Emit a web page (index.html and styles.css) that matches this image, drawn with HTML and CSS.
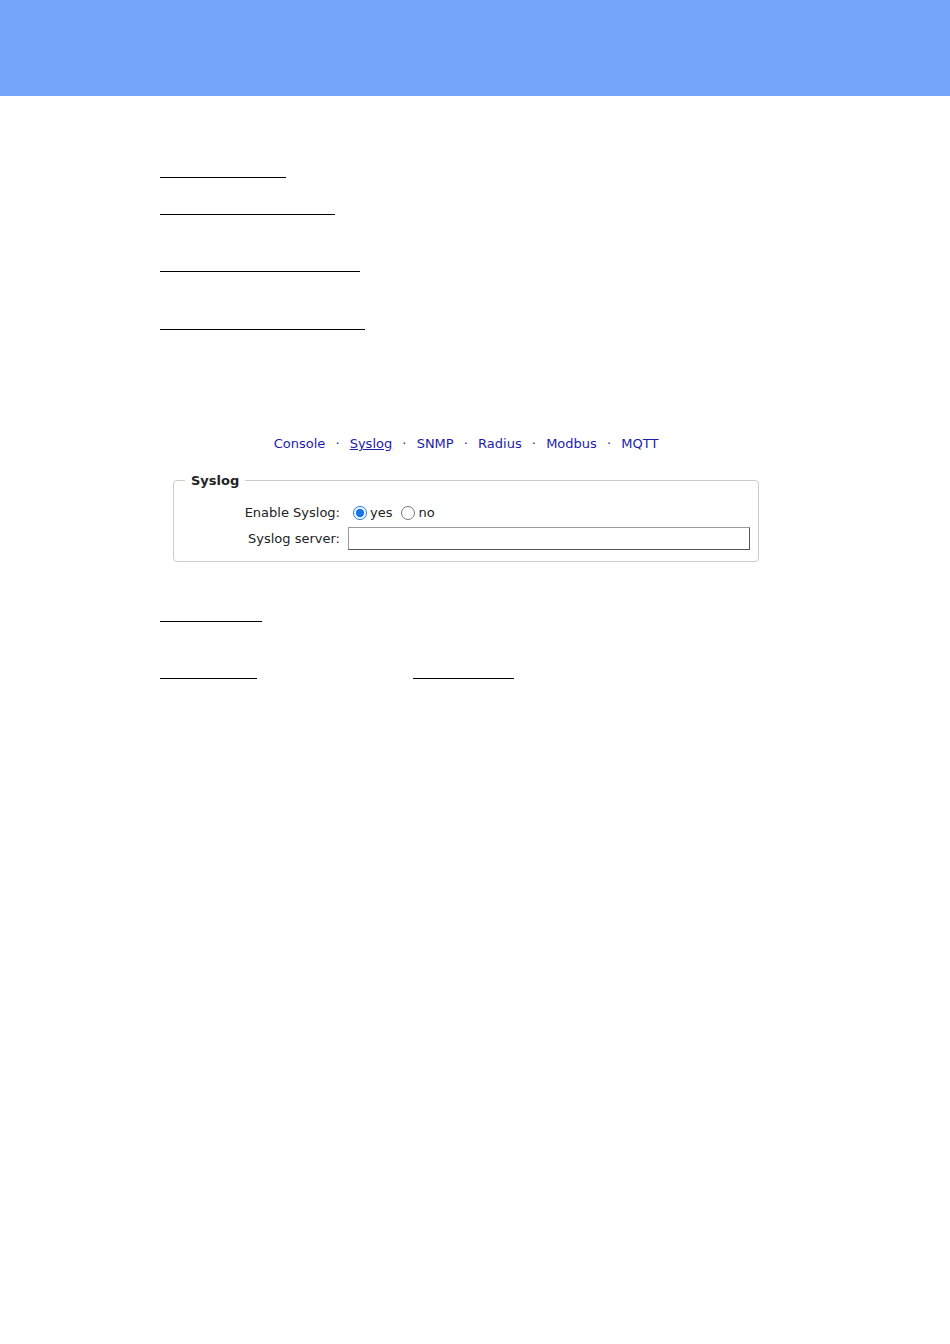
FILE: index.html
```html
<!DOCTYPE html>
<html lang="en">
<head>
    <meta charset="UTF-8">
    <title>Syslog</title>
    <link rel="stylesheet" href="styles.css">
</head>
<body>
    <div class="header"></div>
    <div class="page">
        <div class="rule r1"></div>
        <div class="rule r2"></div>
        <div class="rule r3"></div>
        <div class="rule r4"></div>

        <div class="nav">
            <a href="#">Console</a> <span class="dot">&middot;</span>
            <a href="#" class="current">Syslog</a> <span class="dot">&middot;</span>
            <a href="#">SNMP</a> <span class="dot">&middot;</span>
            <a href="#">Radius</a> <span class="dot">&middot;</span>
            <a href="#">Modbus</a> <span class="dot">&middot;</span>
            <a href="#">MQTT</a>
        </div>

        <fieldset class="box">
            <legend>Syslog</legend>
            <div class="row">
                <label class="lbl">Enable Syslog:</label>
                <div class="val">
                    <label class="opt"><input type="radio" name="en" checked>yes</label>
                    <label class="opt"><input type="radio" name="en">no</label>
                </div>
            </div>
            <div class="row">
                <label class="lbl" for="server">Syslog server:</label>
                <div class="val"><input type="text" id="server" class="server"></div>
            </div>
        </fieldset>

        <div class="rule r5"></div>
        <div class="pair">
            <div class="rule r6"></div>
            <div class="rule r7"></div>
        </div>
    </div>
</body>
</html>
```

FILE: styles.css
```css
body {
    margin: 0;
    background: #ffffff;
    font-family: "DejaVu Sans", Verdana, sans-serif;
    color: #222222;
}
.header {
    height: 96px;
    background: #75a5fa;
}
.page {
    padding: 81px 0 0 160px;
}
.rule {
    height: 1px;
    background: #000000;
}
.r1 { width: 126px; }
.r2 { width: 175px; margin-top: 36px; }
.r3 { width: 200px; margin-top: 56px; }
.r4 { width: 205px; margin-top: 57px; }
.r5 { width: 102px; margin-top: 59px; }
.pair {
    display: flex;
    gap: 156px;
    margin-top: 56px;
}
.r6 { width: 97px; }
.r7 { width: 101px; }

.nav {
    margin-top: 106px;
    width: 612px;
    text-align: center;
    font-size: 13px;
    line-height: 16px;
}
.nav a {
    color: #1c1ca8;
    text-decoration: none;
    margin: 0 3px;
}
.nav a.current {
    text-decoration: underline;
}
.nav .dot {
    color: #1c1ca8;
    margin: 0 3px;
}

.box {
    margin: 21px 0 0 13px;
    width: 586px;
    min-width: 0;
    box-sizing: border-box;
    border: 1px solid #cccccc;
    border-radius: 4px;
    padding: 16px 9px 11px 9px;
}
.box legend {
    font-weight: bold;
    font-size: 13px;
    padding: 0 6px;
    margin-left: 2px;
}
.row {
    display: flex;
    align-items: center;
    font-size: 13px;
}
.row + .row {
    margin-top: 7px;
}
.lbl {
    width: 157px;
    flex-shrink: 0;
    text-align: right;
    padding-right: 8px;
}
.val {
    display: flex;
    align-items: center;
}
.opt {
    display: flex;
    align-items: center;
    margin-right: 4px;
}
.opt input {
    width: 14px;
    height: 14px;
    margin: 2px 3px 0 5px;
    accent-color: #1a73e8;
}
.server {
    width: 402px;
    height: 23px;
    box-sizing: border-box;
    border: 1px solid;
    border-color: #999999 #555555 #555555 #999999;
    margin: 0;
    padding: 2px 4px;
}
```
